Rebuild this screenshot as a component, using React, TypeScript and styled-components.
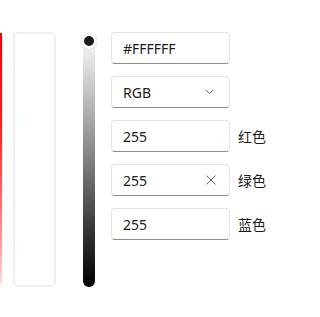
import React from "react";
import styled, { createGlobalStyle } from "styled-components";

const GlobalStyle = createGlobalStyle`
  html, body {
    margin: 0;
    padding: 0;
    background: #ffffff;
  }
  body {
    font-family: "Noto Sans", "Noto Sans CJK SC", sans-serif;
  }
`;

const Page = styled.div`
  display: flex;
  align-items: flex-start;
  padding-top: 32px;
  width: 308px;
  height: 317px;
  box-sizing: border-box;
  overflow: hidden;
`;

const SpectrumEdge = styled.div`
  width: 2px;
  height: 250px;
  margin-top: 1px;
  background: linear-gradient(to bottom, #ff0000 0%, #ff1a1a 35%, #ff5a5a 60%, #ffa0a0 85%, #ffd8d8 100%);
`;

const Preview = styled.div`
  width: 43px;
  height: 255px;
  margin-left: 11px;
  box-sizing: border-box;
  border: 2px solid #efefef;
  border-radius: 5px;
  background: #ffffff;
`;

const SliderTrack = styled.div`
  position: relative;
  width: 12px;
  height: 254px;
  margin-left: 27px;
  margin-top: 1px;
  border-radius: 6px;
  background: linear-gradient(to bottom, #ffffff 0%, #d8d8d8 15%, #808080 50%, #303030 80%, #000000 100%);
`;

const Thumb = styled.div`
  position: absolute;
  top: 0;
  left: -2px;
  width: 16px;
  height: 16px;
  box-sizing: border-box;
  border-radius: 50%;
  border: 3px solid #ffffff;
  background: #1b1b1b;
  box-shadow: 0 0 1px rgba(0, 0, 0, 0.35);
`;

const Form = styled.div`
  display: flex;
  flex-direction: column;
  gap: 12px;
  margin-left: 16px;
`;

const Row = styled.div`
  display: flex;
  align-items: center;
  gap: 8px;
`;

const Field = styled.div`
  display: flex;
  align-items: center;
  width: 119px;
  height: 32px;
  box-sizing: border-box;
  padding: 0 11px;
  border: 1px solid #e5e5e5;
  border-bottom-color: #8d8d8d;
  border-radius: 4px;
  background: #ffffff;
  font-size: 14px;
  color: #1b1b1b;
`;

const FieldText = styled.span`
  flex: 1;
`;

const Label = styled.span`
  font-family: "Noto Sans CJK SC", sans-serif;
  font-size: 14px;
  color: #1b1b1b;
`;

const IconWrap = styled.span<{ $right: number }>`
  display: flex;
  align-items: center;
  margin-right: ${(p) => p.$right}px;
`;

const Chevron = () => (
  <svg width="9" height="6" viewBox="0 0 9 6">
    <path d="M0.8 1 L4.5 4.6 L8.2 1" fill="none" stroke="#5f5f5f" strokeWidth="1" />
  </svg>
);

const Cross = () => (
  <svg width="10" height="10" viewBox="0 0 10 10">
    <path d="M0.5 0.5 L9.5 9.5 M9.5 0.5 L0.5 9.5" fill="none" stroke="#6a6a6a" strokeWidth="1" />
  </svg>
);

export default function App() {
  return (
    <>
      <GlobalStyle />
      <Page>
        <SpectrumEdge />
        <Preview />
        <SliderTrack>
          <Thumb />
        </SliderTrack>
        <Form>
          <Row>
            <Field>
              <FieldText>#FFFFFF</FieldText>
            </Field>
          </Row>
          <Row>
            <Field>
              <FieldText>RGB</FieldText>
              <IconWrap $right={4}>
                <Chevron />
              </IconWrap>
            </Field>
          </Row>
          <Row>
            <Field>
              <FieldText>255</FieldText>
            </Field>
            <Label>红色</Label>
          </Row>
          <Row>
            <Field>
              <FieldText>255</FieldText>
              <IconWrap $right={2}>
                <Cross />
              </IconWrap>
            </Field>
            <Label>绿色</Label>
          </Row>
          <Row>
            <Field>
              <FieldText>255</FieldText>
            </Field>
            <Label>蓝色</Label>
          </Row>
        </Form>
      </Page>
    </>
  );
}
